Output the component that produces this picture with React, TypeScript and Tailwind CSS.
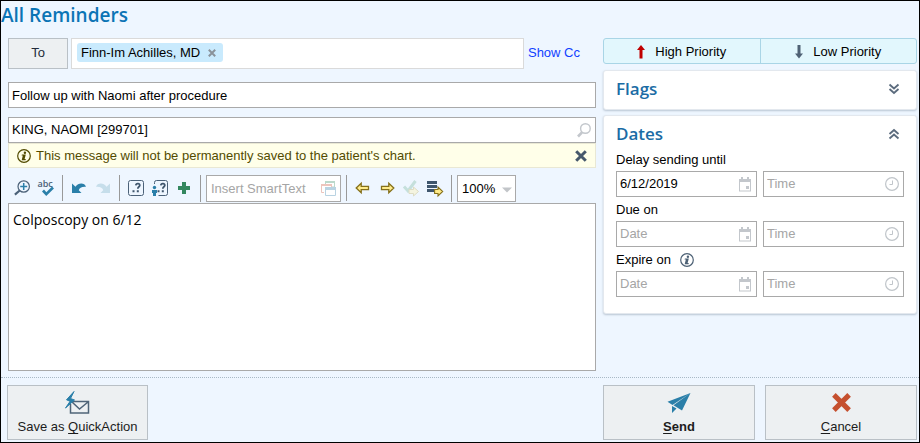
import React, { useState } from "react";

const FONT = "font-['Liberation_Sans',Arial,sans-serif]";
const HEADING = "font-['Open_Sans','Noto_Sans',sans-serif] font-semibold";

function CalendarIcon() {
  return (
    <svg width="14" height="15" viewBox="0 0 14 15" fill="#c3c7cc" aria-hidden="true">
      <path fillRule="evenodd" d="M1 2h2V0h2v2h4V0h2v2h2v12.5H1zM2 5v8.500h10V5z" />
      <path d="M8 9h3v3H8z" />
    </svg>
  );
}

function ClockIcon() {
  return (
    <svg width="14" height="14" viewBox="0 0 14 14" fill="none" stroke="#c0c5ca" aria-hidden="true">
      <circle cx="7" cy="7" r="6.400" strokeWidth="1.200" />
      <path d="M7.500 3.500v4H4.500" />
    </svg>
  );
}

function InfoIcon({ color }: { color: string }) {
  return (
    <svg width="14" height="14" viewBox="0 0 14 14" aria-hidden="true">
      <circle cx="7" cy="7" r="6.300" fill="none" stroke={color} strokeWidth="1.200" />
      <circle cx="7.900" cy="3.700" r="1.200" fill={color} />
      <path d="M4.900 5.500h3.900L7.600 10.100h1.200l-.3 1.100H4.700l1.100-4.600H4.600z" fill={color} />
    </svg>
  );
}

function ChevronsIcon({ up = false }: { up?: boolean }) {
  return (
    <svg width="12" height="12" viewBox="0 0 12 12" fill="none" stroke="#5b6b7d" strokeWidth="1.800" aria-hidden="true">
      {up ? <path d="M1.500 6 6 2l4.500 4M1.500 10.500 6 6.500l4.500 4" /> : <path d="M1.500 1.500 6 5.500l4.500-4M1.500 6 6 10l4.500-4" />}
    </svg>
  );
}

function CrossIcon({ size, color, width = 3 }: { size: number; color: string; width?: number }) {
  return (
    <svg width={size} height={size} viewBox="0 0 12 12" stroke={color} strokeWidth={width} aria-hidden="true">
      <path d="M1.200 1.200l9.600 9.600M10.800 1.200l-9.600 9.600" />
    </svg>
  );
}

function Panel({ title, open = false, children }: { title: string; open?: boolean; children?: React.ReactNode }) {
  return (
    <section className="rounded-[3px] border border-[#e3e8ee] bg-white pr-3 pl-3 shadow-[0_1px_2px_rgba(90,110,130,0.35)]">
      <div className="flex h-[38px] items-center justify-between pb-0.5">
        <h2 className={`${HEADING} text-[17px] leading-6 text-[#1b6ca5]`}>{title}</h2>
        <button type="button" aria-label={`Toggle ${title}`} className="mr-1">
          <ChevronsIcon up={open} />
        </button>
      </div>
      {children}
    </section>
  );
}

function PickerField({ id, label, placeholder, initial = "", children }: { id: string; label: string; placeholder: string; initial?: string; children: React.ReactNode }) {
  return (
    <div className="flex h-[26px] min-w-0 flex-1 items-center border border-[#a9a9a9] bg-white pr-1">
      <input id={id} aria-label={label} placeholder={placeholder} defaultValue={initial} className="min-w-0 flex-1 px-[3px] text-[13px] leading-5 outline-none placeholder:text-[#a5a5a5]" />
      {children}
    </div>
  );
}

function DateRow({ id, label, date, info = false }: { id: string; label: string; date?: string; info?: boolean }) {
  return (
    <div>
      <div className="flex h-6 items-center gap-[9px] pt-0.5 leading-5">
        <label htmlFor={id}>{label}</label>
        {info && <InfoIcon color="#4d6175" />}
      </div>
      <div className="flex gap-1.5">
        <PickerField id={id} label={`${label} date`} placeholder="Date" initial={date}>
          <CalendarIcon />
        </PickerField>
        <PickerField id={`${id}-time`} label={`${label} time`} placeholder="Time">
          <ClockIcon />
        </PickerField>
      </div>
    </div>
  );
}

function Tool({ label, children }: { label: string; children: React.ReactNode }) {
  return (
    <button type="button" aria-label={label} className="flex h-4 w-4 shrink-0 items-center justify-center">
      <svg className="overflow-visible" width="16" height="16" viewBox="0 0 16 16" fill="none" aria-hidden="true">{children}</svg>
    </button>
  );
}

function UndoShape() {
  return <path d="M1 3.500v9.500h9.500L7.800 10.300C8.400 8 10.500 6.500 15 6.800 14 2.800 7.500 2 4.500 6.800z" />;
}

function QuestionBox() {
  return (
    <>
      <path d="M7.800 5.400c.2-2.500 4.400-2.300 4 .1-.2 1.300-2 1.400-2 3.300" stroke="#3f566d" strokeWidth="1.700" />
      <path d="M8.800 10.200h2v2h-2zM4.500 10.200h2v2h-2z" fill="#3f566d" />
    </>
  );
}

const ARROW = "M1.200 0 6.200-4.800v3.100h7.300v3.400H6.200v3.100z";

function Toolbar() {
  return (
    <div role="toolbar" aria-label="Formatting" className="mt-[7px] flex h-7 items-start">
      <div className="flex h-[26px] items-center gap-2 pr-2 pl-1.5">
        <Tool label="Zoom in">
          <circle cx="9.700" cy="6.500" r="5.700" stroke="#4b6178" strokeWidth="1.200" />
          <path d="M9.700 3v7M6.200 6.500h7" stroke="#2a7fa9" strokeWidth="1.500" />
          <path d="M5.700 10.500.9 14.600" stroke="#4b6178" strokeWidth="2.200" />
        </Tool>
        <Tool label="Check spelling">
          <text x="-.5" y="7" fontSize="9" fontWeight="600" fontFamily="Open Sans, sans-serif" fill="#4b6178">abc</text>
          <path d="m5 10.500 3.300 3.600L15 7.500" stroke="#2a7fa9" strokeWidth="2.700" />
        </Tool>
      </div>
      <div className="flex h-[26px] items-center gap-2 border-l border-[#999] px-2">
        <Tool label="Undo"><g fill="#2a7fa9"><UndoShape /></g></Tool>
        <Tool label="Redo"><g fill="#c6deeb" transform="matrix(-1 0 0 1 16 0)"><UndoShape /></g></Tool>
      </div>
      <div className="flex h-[26px] items-center gap-2 border-l border-[#999] px-2">
        <Tool label="Next wildcard">
          <rect x=".5" y=".5" width="15" height="15" rx="2" stroke="#4b6178" />
          <QuestionBox />
        </Tool>
        <Tool label="Assign wildcard">
          <path d="M2.500 4V2.500q0-2 2-2h9q2 0 2 2v11q0 2-2 2H6.500" stroke="#4b6178" />
          <g transform="translate(1 0)"><QuestionBox /></g>
          <circle cx="2.500" cy="7.500" r="1.700" fill="#2a7fa9" />
          <path d="M0 10h5v3H4v3H1v-3H0z" fill="#2a7fa9" />
        </Tool>
        <Tool label="Add">
          <path d="M6 2h4v4h4v4h-4v4H6v-4H2V6h4z" fill="#33875f" />
        </Tool>
      </div>
      <div className="flex border-l border-[#999] px-[5px]">
        <div className="flex h-[27px] w-[135px] items-center border border-[#a9a9a9] bg-white pr-1 pl-1">
          <input aria-label="Insert SmartText" placeholder="Insert SmartText" className="min-w-0 flex-1 text-[13px] leading-5 outline-none placeholder:text-[#a5a5a5]" />
          <svg width="15" height="16" viewBox="0 0 15 16" fill="none" aria-hidden="true">
            <path d="M4.500 6V.5h9V6z" stroke="#bcd9cb" fill="#fff" />
            <path d="M4 0h10v2H4z" fill="#bcd9cb" />
            <path d="M.5 11.500v-8h10v8z" stroke="#edc5bd" fill="#fff" />
            <path d="M0 3h11v2H0z" fill="#edc5bd" />
            <path d="M3 6h12v10H3z" fill="#fff" />
            <path d="M4.500 7.500h10v7h-10z" stroke="#b9d3e2" />
            <path d="M4 6h11v3H4z" fill="#b9d3e2" />
          </svg>
        </div>
      </div>
      <div className="flex h-[26px] items-center gap-2 border-l border-[#999] px-2">
        <Tool label="Previous field">
          <path d={ARROW} transform="translate(0 8)" fill="#ffeb8a" stroke="#85701a" strokeWidth="1.300" />
        </Tool>
        <Tool label="Next field">
          <path d={ARROW} transform="matrix(-1 0 0 1 16 8)" fill="#ffeb8a" stroke="#85701a" strokeWidth="1.300" />
        </Tool>
        <Tool label="Accept field">
          <path d="m1 6.500 4 4.500 7.500-10" stroke="#c5e0dc" strokeWidth="3" />
          <path d="M6 9.500h4.500V7l5 4.500-5 4.500v-2.500H6z" fill="#f4f4e0" stroke="#dddcc5" />
        </Tool>
        <Tool label="Accept all">
          <path d="M0 1h10v3H0zM0 5h10v3H0zM0 9h7v3H0z" fill="#3f566d" />
          <path d="M7.600 9.500h3.400V7l4.700 4.500L11 16v-2.500H7.600z" fill="#ffeb8a" stroke="#85701a" strokeWidth="1.100" />
        </Tool>
      </div>
      <div className="flex border-l border-[#999] pl-[5px]">
        <div className="relative">
          <select aria-label="Zoom level" defaultValue="100%" className="block h-[27px] w-[59px] appearance-none border border-[#a9a9a9] bg-white pl-1 text-[13px] leading-5 outline-none">
            <option>100%</option>
            <option>150%</option>
          </select>
          <svg className="pointer-events-none absolute top-3 right-1" width="10" height="6" viewBox="0 0 10 6" fill="#c2c5c9" aria-hidden="true"><path d="M0 .5h10L5 5.500z" /></svg>
        </div>
      </div>
    </div>
  );
}

function ActionButton({ className, icon, children }: { className: string; icon: React.ReactNode; children: React.ReactNode }) {
  return (
    <button type="button" className={`flex h-[55px] flex-col items-center border border-[#b9c0c6] bg-[#edf0f2] leading-4 text-[#1c1c1c] ${className}`}>
      <span className="flex h-[33px] items-center">{icon}</span>
      <span>{children}</span>
    </button>
  );
}

const underline = "underline underline-offset-2";

export default function App() {
  const [banner, setBanner] = useState(true);
  return (
    <main className={`${FONT} border border-black bg-[#eef6ff] text-[13px] leading-5 text-black`}>
      <h1 className={`${HEADING} h-[37px] pt-0.5 text-[19px] leading-6 text-[#0b74b5]`}>All Reminders</h1>

      <div className="flex gap-[7px] pr-0.5 pl-[7px]">
        <div className="flex min-w-0 flex-1 flex-col">
          <div className="flex h-[31px] items-center">
            <button type="button" className="h-full w-[60px] border border-[#b9c0c6] bg-[#edf0f2] pb-0.5 text-[#222b3a]">To</button>
            <div className="ml-[3px] flex h-full min-w-0 flex-1 items-center border border-[#dadada] bg-white pl-[5px]">
              <span className="mb-0.5 flex h-[19px] items-center gap-2 rounded-[3px] bg-[#c9eafd] pr-[7px] pl-1 leading-[19px]">
                Finn-Im Achilles, MD
                <button type="button" aria-label="Remove recipient"><CrossIcon size={8} color="#8a929a" /></button>
              </span>
            </div>
            <a href="#cc" className="mr-4 ml-1 pb-0.5 text-[#1040ff]">Show Cc</a>
          </div>

          <input aria-label="Subject" defaultValue="Follow up with Naomi after procedure" className="mt-[13px] h-[26px] border border-[#a9a9a9] bg-white px-[3px] outline-none" />

          <div className="mt-[9px] flex h-[26px] items-center border border-[#a9a9a9] bg-white pr-1">
            <input aria-label="Patient" defaultValue="KING, NAOMI [299701]" className="min-w-0 flex-1 px-[3px] outline-none" />
            <svg width="14" height="15" viewBox="0 0 14 15" fill="none" stroke="#c3c7cc" aria-hidden="true">
              <circle cx="8.400" cy="5.500" r="4.800" strokeWidth="1.400" />
              <path d="M5 9.300 1 13.500" strokeWidth="2.600" />
            </svg>
          </div>

          {banner && (
            <div role="status" className="flex h-[25px] items-center gap-[5px] border border-[#e9e8d4] bg-[#ffffe9] pr-2 pl-2 text-[#524b00]">
              <InfoIcon color="#524b00" />
              <span className="flex-1">This message will not be permanently saved to the patient's chart.</span>
              <button type="button" aria-label="Dismiss" onClick={() => setBanner(false)}><CrossIcon size={12} color="#46586b" /></button>
            </div>
          )}

          <Toolbar />

          <textarea aria-label="Message" defaultValue="Colposcopy on 6/12" className="h-[168px] resize-none border border-[#a9a9a9] bg-white px-1 py-1.5 font-['Open_Sans','Noto_Sans',sans-serif] text-sm leading-5 outline-none" />
        </div>

        <aside className="flex w-[314px] shrink-0 flex-col">
          <div className="flex h-[26px] rounded-[3px] border border-[#a9d5e6] bg-[#e2f7fd]">
            <button type="button" className="flex flex-1 items-center justify-center gap-2.5 border-r border-[#a9d5e6] pt-0.5">
              <svg width="8" height="14" viewBox="0 0 8 14" fill="#c00000" aria-hidden="true"><path d="M4 0l4 5H5.500v8.500h-3V5H0z" /></svg>
              High Priority
            </button>
            <button type="button" className="flex flex-1 items-center justify-center gap-2.5 pt-0.5">
              <svg width="8" height="14" viewBox="0 0 8 14" fill="#4f6275" aria-hidden="true"><path d="M4 13.500l4-5H5.500V0h-3v8.500H0z" /></svg>
              Low Priority
            </button>
          </div>
          <div className="mt-1.5 flex flex-col gap-[5px]">
            <Panel title="Flags" />
            <Panel title="Dates" open>
              <div className="-mt-[7px] flex flex-col pb-4">
                <DateRow id="delay" label="Delay sending until" date="6/12/2019" />
                <DateRow id="due" label="Due on" />
                <DateRow id="expire" label="Expire on" info />
              </div>
            </Panel>
          </div>
        </aside>
      </div>

      <footer className="mt-1.5 flex border-t border-dotted border-[#a9b9c6] pt-[7px] pr-0.5 pb-[2px] pl-1.5">
        <ActionButton
          className="mr-auto w-[141px]"
          icon={
            <svg width="25" height="24" viewBox="0 0 25 24" fill="none" aria-hidden="true">
              <path d="M6 10.500h17.500v11.500H5.500V13M7 11l7.500 7L23 11" stroke="#4f6478" strokeWidth="1.500" />
              <path d="M9 .5 1.500 8.800l3.600 1.500L.5 17 9.500 9l-4-1.500z" fill="#2a7fa9" stroke="#2a7fa9" />
            </svg>
          }
        >
          Save as <span className={underline}>Q</span>uickAction
        </ActionButton>
        <ActionButton
          className="w-[152px] font-bold"
          icon={
            <svg width="24" height="20" viewBox="0 0 24 20" fill="#2a7fa9" aria-hidden="true">
              <path d="M23.500 0 .5 8.700l5 3.200zM23.500 0 6.500 12.300 15 17.500zM5 13v7l4.500-4.500z" />
            </svg>
          }
        >
          <span className={underline}>S</span>end
        </ActionButton>
        <ActionButton className="ml-2.5 w-[152px]" icon={<CrossIcon size={19} color="#c5502f" width={3.200} />}>
          <span className={underline}>C</span>ancel
        </ActionButton>
      </footer>
    </main>
  );
}
